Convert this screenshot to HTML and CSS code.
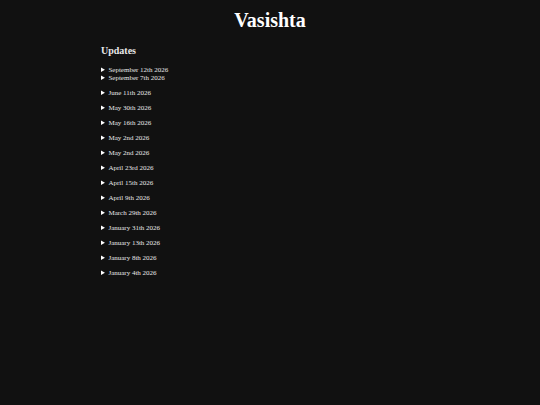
FILE: index.html
```html
<!DOCTYPE html>
<html lang="en">
<head>
  <meta charset="UTF-8">
  <meta name="viewport" content="width=device-width, initial-scale=1.0">
  <title>Vasishta</title>
  <link rel="stylesheet" href="styles.css">
</head>
<body>
  <h1>Vasishta</h1>
  <main class="content">
    <h2>Updates</h2>
    <details class="latest"><summary>September 12th 2026</summary></details>
    <details><summary>September 7th 2026</summary></details>
    <details><summary>June 11th 2026</summary></details>
    <details><summary>May 30th 2026</summary></details>
    <details><summary>May 16th 2026</summary></details>
    <details><summary>May 2nd 2026</summary></details>
    <details><summary>May 2nd 2026</summary></details>
    <details><summary>April 23rd 2026</summary></details>
    <details><summary>April 15th 2026</summary></details>
    <details><summary>April 9th 2026</summary></details>
    <details><summary>March 29th 2026</summary></details>
    <details><summary>January 31th 2026</summary></details>
    <details><summary>January 13th 2026</summary></details>
    <details><summary>January 8th 2026</summary></details>
    <details><summary>January 4th 2026</summary></details>
  </main>
</body>
</html>
```
FILE: styles.css
```css
body {
  margin: 0;
  background-color: #111111;
  color: #e8e8e8;
  font-family: "Liberation Serif", "Times New Roman", serif;
  font-size: 7px;
  line-height: 8px;
}
h1 {
  margin: 8px 0 12px;
  color: #ffffff;
  font-size: 20px;
  line-height: 24px;
  text-align: center;
}
.content {
  max-width: 338px;
  margin: 0 auto;
}
h2 {
  margin: 0 0 8px;
  font-size: 10px;
  line-height: 14px;
}
details {
  margin-bottom: 7px;
}
.latest {
  margin-bottom: 0;
}
summary {
  cursor: pointer;
}
summary::marker {
  color: #ffffff;
}
```
